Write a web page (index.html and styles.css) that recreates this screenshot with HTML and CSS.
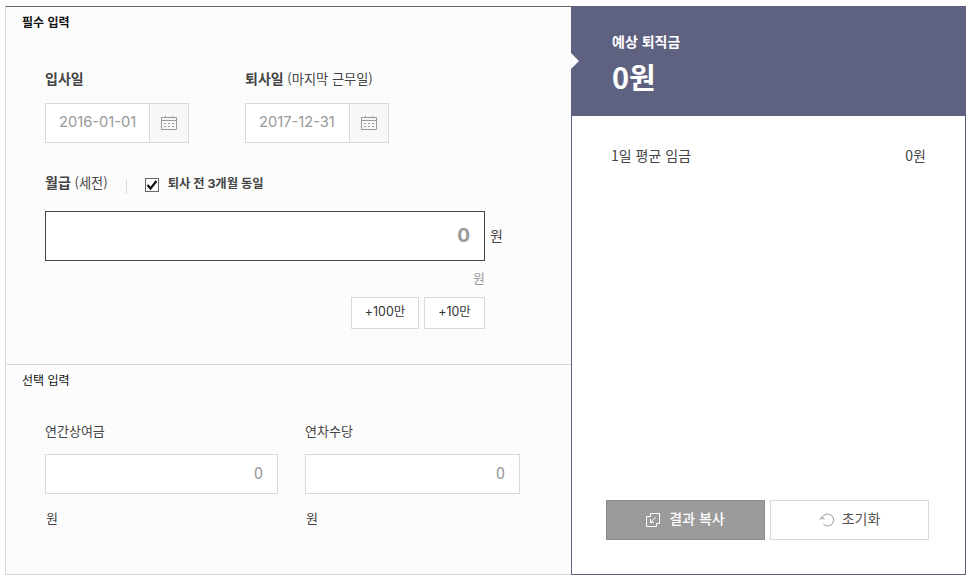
FILE: index.html
```html
<!DOCTYPE html>
<html lang="ko">
    <head>
    <meta charset="utf-8">
    <title>퇴직금 계산기</title>
    <link rel="stylesheet" href="styles.css">
    </head>
    <body>
      <div class="calculator">
        <div class="input-area">
          <div class="required">
            <h2 class="section-title">필수 입력</h2>
            <div class="date-row">
              <div class="date-item">
                <div class="label"><b>입사일</b></div>
                <div class="date-box">
                  <input type="text" class="date-input" value="2016-01-01">
                  <button class="calendar-button">
                    <svg class="calendar-icon" width="16" height="16" viewBox="0 0 16 16">
                      <path d="M.5 2.5h15v12H.5zM.5 5.5h15M4.5 1v2M11.5 1v2"/>
                      <path d="M3 8.5h2M7 8.5h2M11 8.5h2M3 11.5h2M7 11.5h2M11 11.5h2"/>
                    </svg>
                  </button>
                </div>
              </div>
              <div class="date-item">
                <div class="label"><b>퇴사일</b> (마지막 근무일)</div>
                <div class="date-box">
                  <input type="text" class="date-input" value="2017-12-31">
                  <button class="calendar-button">
                    <svg class="calendar-icon" width="16" height="16" viewBox="0 0 16 16">
                      <path d="M.5 2.5h15v12H.5zM.5 5.5h15M4.5 1v2M11.5 1v2"/>
                      <path d="M3 8.5h2M7 8.5h2M11 8.5h2M3 11.5h2M7 11.5h2M11 11.5h2"/>
                    </svg>
                  </button>
                </div>
              </div>
            </div>
            <div class="pay-head">
              <div class="label"><b>월급</b> (세전)</div>
              <label class="same-check">
                <span class="checkbox">
                  <svg width="12" height="12" viewBox="0 0 12 12"><path d="M1.5 6l3 3.5L10.5 2"/></svg>
                </span>
                <span class="same-text">퇴사 전 3개월 동일</span>
              </label>
            </div>
            <div class="pay-row">
              <input type="text" class="pay-input" value="0">
              <span class="won">원</span>
            </div>
            <div class="pay-korean">원</div>
            <div class="add-buttons">
              <button class="add-button add-wide">+100만</button>
              <button class="add-button">+10만</button>
            </div>
          </div>
          <div class="optional">
            <h2 class="section-title light">선택 입력</h2>
            <div class="option-row">
              <div class="option-item bonus">
                <div class="option-label">연간상여금</div>
                <input type="text" class="option-input" value="0">
                <div class="option-won">원</div>
              </div>
              <div class="option-item leave">
                <div class="option-label">연차수당</div>
                <input type="text" class="option-input" value="0">
                <div class="option-won">원</div>
              </div>
            </div>
          </div>
        </div>
        <div class="result-area">
          <div class="result-head">
            <div class="result-title">예상 퇴직금</div>
            <div class="result-total">0원</div>
          </div>
          <div class="result-line">
            <span>1일 평균 임금</span>
            <span>0원</span>
          </div>
          <div class="result-buttons">
            <button class="result-button copy">
              <svg width="14" height="14" viewBox="0 0 14 14">
                <path d="M4.5 3.5v-3h9v10h-3M4.5 3.5h-4v10h10v-3M9.5 4.5l-5 5M4.5 6v3.5H8"/>
              </svg>
              <span>결과 복사</span>
            </button>
            <button class="result-button reset">
              <svg width="16" height="14" viewBox="0 0 16 14">
                <path d="M2.6 6.6A6 6 0 1 1 4.4 11.3M.4 6.4l2.2-2.2L5.6 6.4"/>
              </svg>
              <span>초기화</span>
            </button>
          </div>
        </div>
      </div>
    </body>
</html>
```

FILE: styles.css
```css
*{
  box-sizing:border-box;
}
body{
  margin:6px 3px 0 5px;
  background-color:white;
  color:#444;
  font-family:"Noto Sans CJK KR", sans-serif;
  font-size:13px;
  line-height:20px;
}
input, button{
  margin:0;
  padding:0;
  border:1px solid #d9d9d9;
  border-radius:0;
  background-color:white;
  font-family:inherit;
}
svg{
  fill:none;
  stroke:currentColor;
}
.calculator{
  display:flex;
  height:569px;
}
.input-area{
  display:flex;
  flex-direction:column;
  width:566px;
  border:1px solid #d9d9d9;
  border-top-color:#666;
  border-right:none;
  background-color:#fcfcfc;
}
.required{
  height:358px;
  border-bottom:1px solid #d9d9d9;
  padding:5px 0 0 39px;
}
.optional{
  padding:5px 0 0 39px;
}
.section-title{
  margin:0 0 0 -23px;
  font-size:12px;
  font-weight:bold;
  line-height:20px;
  color:#111;
}
.light{
  font-weight:normal;
}
.date-row{
  display:flex;
  gap:56px;
  margin-top:36px;
}
.date-item{
  width:144px;
  white-space:nowrap;
}
.label{
  height:20px;
  font-size:13.2px;
}
.label b{
  font-size:14px;
}
.date-box{
  display:flex;
  margin-top:15px;
  height:40px;
}
.date-input{
  width:104px;
  border-right:none;
  padding:0 0 3px 13px;
  font-family:Inter, sans-serif;
  font-size:14.7px;
  color:#999;
}
.calendar-button{
  display:flex;
  align-items:center;
  justify-content:center;
  width:40px;
  background-color:#f7f7f7;
  color:#999;
}
.pay-head{
  display:flex;
  margin-top:29px;
  height:20px;
}
.same-check{
  display:flex;
  align-items:center;
  margin-left:18px;
}
.same-check::before{
  content:"";
  width:1px;
  height:15px;
  margin:9px 18px 0 0;
  background-color:#d9d9d9;
}
.checkbox{
  width:14px;
  height:14px;
  margin-top:6px;
  border:1px solid #666;
  background-color:white;
  color:#111;
}
.checkbox svg{
  display:block;
  stroke-width:2.2;
}
.same-text{
  margin:3px 0 0 9px;
  font-family:Inter, "Noto Sans CJK KR", sans-serif;
  font-size:12.3px;
  font-weight:bold;
}
.pay-row{
  display:flex;
  align-items:center;
  gap:5px;
  margin-top:19px;
}
.pay-input{
  width:440px;
  height:50px;
  border-color:#444;
  padding:0 14px 1px 0;
  text-align:right;
  font-family:Inter, sans-serif;
  font-size:19px;
  font-weight:bold;
  color:#999;
}
.won{
  padding-bottom:2px;
  font-size:14px;
}
.pay-korean{
  width:440px;
  margin-top:7px;
  text-align:right;
  color:#999;
}
.add-buttons{
  display:flex;
  justify-content:flex-end;
  gap:5px;
  width:440px;
  margin-top:9px;
}
.add-button{
  width:61px;
  height:32px;
  padding-bottom:4px;
  font-family:Inter, "Noto Sans CJK KR", sans-serif;
  font-size:12.4px;
  color:#333;
}
.add-wide{
  width:68px;
}
.option-row{
  display:flex;
  gap:27px;
  margin-top:31px;
}
.bonus{
  width:233px;
}
.leave{
  width:215px;
}
.option-input{
  display:block;
  width:100%;
  height:40px;
  margin-top:13px;
  padding:0 14px 4px 0;
  text-align:right;
  font-size:16px;
  color:#999;
}
.option-won{
  margin:14px 0 0 1px;
}
.result-area{
  display:flex;
  flex-direction:column;
  width:395px;
  border:1px solid #5f6181;
  border-top:none;
}
.result-head{
  position:relative;
  height:110px;
  padding:24px 0 0 40px;
  background-color:#5f6181;
  color:white;
  font-weight:bold;
}
.result-head::before{
  content:"";
  position:absolute;
  left:-1px;
  top:47px;
  border:8px solid transparent;
  border-left-color:#fcfcfc;
  border-right:none;
}
.result-title{
  font-size:14px;
  line-height:22px;
}
.result-total{
  margin-top:6px;
  font-size:29px;
  line-height:36px;
}
.result-line{
  display:flex;
  justify-content:space-between;
  padding:29px 39px 0 39px;
  font-size:14px;
  line-height:20px;
}
.result-buttons{
  display:flex;
  gap:5px;
  margin:auto 36px 34px 34px;
}
.result-button{
  display:flex;
  align-items:center;
  justify-content:center;
  width:159px;
  height:40px;
  font-size:14px;
  color:#555;
}
.result-button span{
  padding-bottom:4px;
}
.copy{
  gap:9px;
  border-color:#8c8c8c;
  background-color:#9b9b9b;
  color:white;
}
.copy span{
  font-weight:500;
}
.reset{
  gap:7px;
}
.reset svg{
  color:#999;
}
```
